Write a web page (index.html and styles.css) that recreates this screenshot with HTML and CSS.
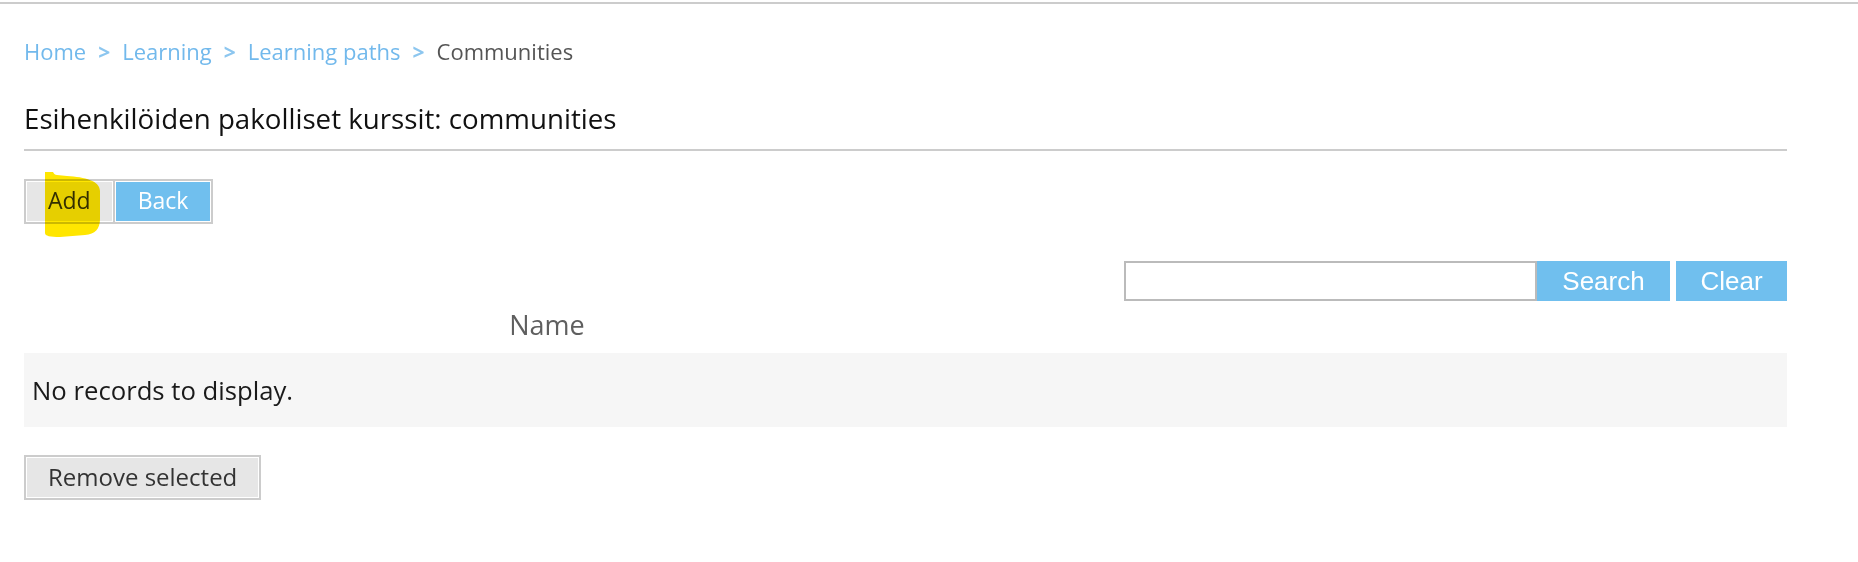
FILE: index.html
```html
<!DOCTYPE html>
<html lang="en">
<head>
	<meta charset="UTF-8">
	<title>Esihenkilöiden pakolliset kurssit: communities</title>
	<link rel="stylesheet" href="styles.css">
</head>
<body>
	<div class="topbar"></div>
	<div id="wrapper">
		<div class="breadcrumb">
			<a href="#">Home</a><span class="sep">&gt;</span><a href="#">Learning</a><span class="sep">&gt;</span><a href="#">Learning paths</a><span class="sep">&gt;</span><span class="current">Communities</span>
		</div>

		<h1>Esihenkilöiden pakolliset kurssit: communities</h1>

		<div class="toolbar">
			<button class="btn btn-gray">Add</button><button class="btn btn-blue">Back</button>
			<!-- highlighter mark drawn over the Add button -->
			<svg class="marker" width="56" height="67" viewBox="0 0 56 67">
				<path d="M0,1 L8,1 C9,3 10,4 12,4 L22,5 C40,6 55,10 55,20 L55,48 C55,58 50,63 40,64 L15,66 C5,66 0,65 0,62 Z" fill="#ffe600"/>
			</svg>
		</div>

		<div class="search">
			<input type="text" class="searchInput"><button class="sbtn sbtn-search">Search</button><button class="sbtn sbtn-clear">Clear</button>
		</div>

		<div class="grid">
			<div class="gridHead">
				<div class="col-name">Name</div>
				<div class="col-rest"></div>
			</div>
			<div class="noRecords">No records to display.</div>
		</div>

		<button class="btn btn-gray btn-remove">Remove selected</button>
	</div>
</body>
</html>
```

FILE: styles.css
```css
body {
	margin: 0;
	background-color: #fff;
	font-family: "Open Sans", "Noto Sans", sans-serif;
	color: #111;
}
.topbar {
	margin-top: 2px;
	border-top: 2px solid #ccc;
}
#wrapper {
	margin: 0 71px 0 24px;
}
.breadcrumb {
	margin-top: 33px;
	font-size: 22px;
	line-height: 28px;
	color: #72b9ec;
}
.breadcrumb a {
	color: #72b9ec;
	text-decoration: none;
}
.breadcrumb .sep {
	margin: 0 12px;
	font-weight: bold;
	font-size: 21px;
	color: #8cc6ef;
}
.breadcrumb .current {
	color: #555;
}
h1 {
	margin: 34px 0 0 0;
	padding-bottom: 13px;
	border-bottom: 2px solid #ccc;
	font-size: 27.7px;
	font-weight: normal;
	line-height: 36px;
	color: #111;
}
.toolbar {
	position: relative;
	display: flex;
	margin-top: 28px;
}
.btn {
	height: 45px;
	padding: 0 22px 2px 22px;
	border: 2px solid #ccc;
	box-shadow: inset 0 0 0 1px #fff;
	font-family: "Open Sans", "Noto Sans", sans-serif;
	font-size: 23px;
	line-height: 37px;
	cursor: pointer;
}
.btn-gray {
	background-color: #e6e6e6;
	color: #333;
}
.btn-blue {
	margin-left: -2px;
	padding: 0 23px 2px 23px;
	background-color: #70bfee;
	color: #fff;
}
.marker {
	position: absolute;
	left: 21px;
	top: -8px;
	mix-blend-mode: multiply;
	pointer-events: none;
}
.search {
	display: flex;
	justify-content: flex-end;
	margin-top: 37px;
}
.searchInput {
	box-sizing: border-box;
	width: 413px;
	height: 40px;
	margin: 0;
	border: 2px solid #bbb;
	padding: 0 6px;
	font-size: 20px;
}
.sbtn {
	height: 40px;
	margin: 0;
	border: none;
	padding: 0;
	background-color: #70bfee;
	color: #fff;
	font-family: "Liberation Sans", Arial, sans-serif;
	font-size: 26px;
	cursor: pointer;
}
.sbtn-search {
	width: 133px;
}
.sbtn-clear {
	width: 111px;
	margin-left: 6px;
}
.gridHead {
	display: grid;
	grid-template-columns: 1046px 1fr;
	padding: 6px 0 10px 0;
}
.col-name {
	text-align: center;
	font-size: 27px;
	line-height: 36px;
	color: #5f5f5f;
}
.noRecords {
	display: flex;
	align-items: center;
	height: 74px;
	padding-left: 8px;
	background-color: #f6f6f6;
	font-size: 25.7px;
	color: #1a1a1a;
}
.btn-remove {
	margin-top: 28px;
	padding: 0 22px 2px 22px;
	font-size: 24px;
}
```
